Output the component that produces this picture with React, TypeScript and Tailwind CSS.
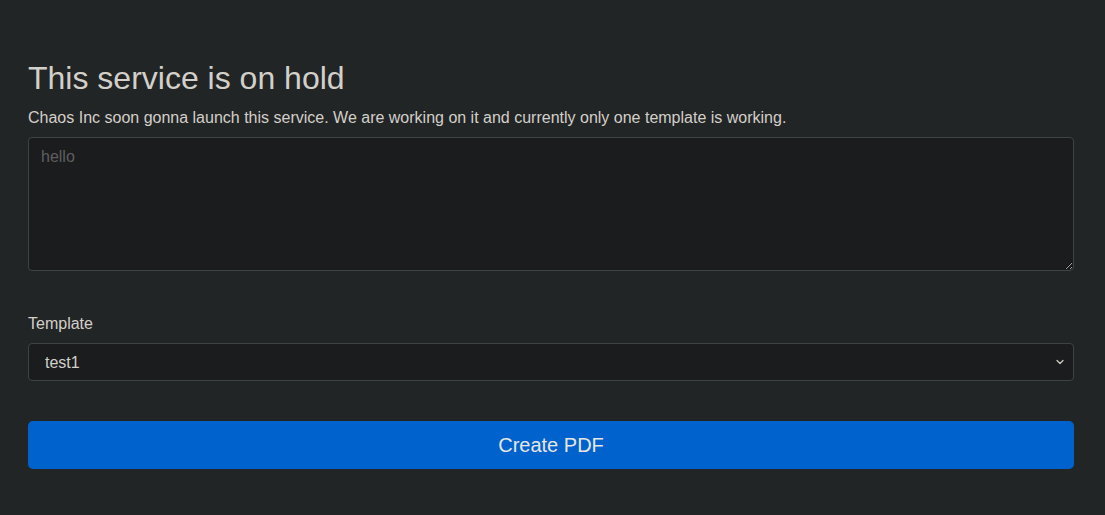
import React, { useState } from 'react';

const App: React.FC = () => {
  const [text, setText] = useState('');
  const [template, setTemplate] = useState('test1');

  return (
    <div
      className="min-h-screen bg-[#222526] text-[#d3cfc9] pt-[59px] pl-[28px] pr-[31px]"
      style={{ fontFamily: '"Liberation Sans", Arial, sans-serif' }}
    >
      <h2 className="text-[32px] leading-[1.2] mb-2 font-normal">This service is on hold</h2>
      <p className="text-base leading-6 pt-px mb-[7px]">
        Chaos Inc soon gonna launch this service. We are working on it and currently only one template is working.
      </p>

      <textarea
        value={text}
        onChange={e => setText(e.target.value)}
        placeholder="hello"
        className="block w-full h-[134px] bg-[#1a1c1e] border border-[#3e4346] rounded px-3 pt-[7px] pb-[5px] text-base leading-6 text-[#d3cfc9] placeholder:text-[#5f5f5f] outline-none"
      />

      <label className="block mt-[41px] mb-[7px] text-base leading-6">Template</label>
      <div className="relative">
        <select
          value={template}
          onChange={e => setTemplate(e.target.value)}
          className="block w-full h-[38px] appearance-none bg-[#1a1c1e] border border-[#3e4346] rounded pl-4 pr-9 pt-[2px] text-base text-[#d3cfc9] outline-none"
        >
          <option value="test1">test1</option>
        </select>
        <svg
          className="pointer-events-none absolute right-[9px] top-[15px]"
          width="10"
          height="8"
          viewBox="0 0 16 16"
          fill="none"
          stroke="#cfcbc4"
          strokeWidth="2.5"
          strokeLinecap="round"
          strokeLinejoin="round"
        >
          <path d="M2 5l6 6 6-6" />
        </svg>
      </div>

      <button className="block w-full h-12 mt-10 bg-[#0062cc] rounded-[5px] text-xl text-[#e8e6e3]">
        Create PDF
      </button>
    </div>
  );
};

export default App;
